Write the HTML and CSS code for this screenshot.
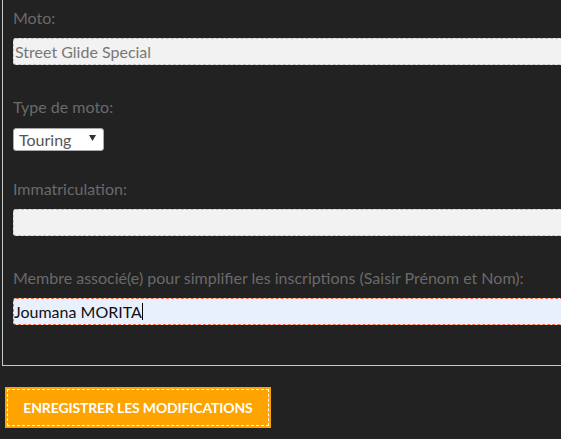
FILE: index.html
```html
<!DOCTYPE html>
<html lang="fr">
<head>
<meta charset="utf-8">
<title>Moto</title>
<link rel="stylesheet" href="styles.css">
</head>
<body>
<form class="form">
  <div class="fieldset">
    <div class="field">
      <label class="label">Moto:</label>
      <input class="input" type="text" value="Street Glide Special">
    </div>
    <div class="field field-select">
      <label class="label">Type de moto:</label>
      <div class="select-wrap">
        <select class="select">
          <option>Touring</option>
        </select>
        <svg class="select-arrow" width="7" height="6" viewBox="0 0 7 6"><path d="M0 0 H7 L3.5 6 Z" fill="#333"/></svg>
      </div>
    </div>
    <div class="field">
      <label class="label">Immatriculation:</label>
      <input class="input" type="text" value="">
    </div>
    <div class="field field-last">
      <label class="label">Membre associé(e) pour simplifier les inscriptions (Saisir Prénom et Nom):</label>
      <div class="input input-active">Joumana MORITA<span class="caret"></span></div>
    </div>
  </div>
  <div class="actions">
    <button class="btn" type="button">Enregistrer les modifications</button>
  </div>
</form>
</body>
</html>
```

FILE: styles.css
```css
html, body {
  margin: 0;
  padding: 0;
  background: #222222;
  overflow: hidden;
}
body {
  font-family: Lato, "Open Sans", sans-serif;
  font-size: 16px;
  color: #6a6a6a;
}
.form {
  display: block;
  width: 561px;
  overflow: hidden;
}
.fieldset {
  margin-left: 2px;
  width: 620px;
  border: 1px solid #c8c8c8;
  border-top: none;
  padding: 8px 10px 40px 10px;
}
.field {
  display: flex;
  flex-direction: column;
  align-items: flex-start;
  margin-bottom: 32px;
}
.field-select {
  margin-bottom: 28px;
}
.field-last {
  margin-bottom: 0;
}
.label {
  display: block;
  line-height: 20px;
  margin-bottom: 10px;
  color: #6a6a6a;
  white-space: nowrap;
}
.field-select .label {
  margin-bottom: 11px;
}
.input {
  box-sizing: border-box;
  width: 600px;
  height: 27px;
  margin: 0;
  padding: 0 1px;
  border: 1px dashed #c4c4c4;
  border-radius: 3px;
  background: #f2f2f2;
  font-family: Lato, "Open Sans", sans-serif;
  font-size: 16px;
  color: #777777;
  outline: none;
}
.input-active {
  display: flex;
  align-items: center;
  padding: 0;
  background: #e8f0fe;
  border-color: #f26a3e;
  color: #111111;
}
.caret {
  display: inline-block;
  width: 1px;
  height: 17px;
  background: #000;
}
.select-wrap {
  position: relative;
  width: 91px;
  height: 23px;
}
.select {
  appearance: none;
  -webkit-appearance: none;
  box-sizing: border-box;
  width: 91px;
  height: 23px;
  margin: 0;
  padding: 0 0 0 5px;
  border: 1px solid #a9a9a9;
  border-radius: 3px;
  background: #ffffff;
  font-family: Lato, "Open Sans", sans-serif;
  font-size: 16px;
  color: #555555;
}
.select-arrow {
  position: absolute;
  right: 8px;
  top: 7px;
  pointer-events: none;
}
.actions {
  padding: 21px 0 0 5px;
}
.btn {
  display: block;
  box-sizing: border-box;
  width: 266px;
  height: 41px;
  margin: 0;
  padding: 0;
  border: none;
  background: #ffa300;
  outline: 1px dashed #ffffff;
  outline-offset: -3px;
  font-family: Lato, "Open Sans", sans-serif;
  font-weight: 700;
  font-size: 14px;
  letter-spacing: -0.15px;
  text-transform: uppercase;
  color: #ffffff;
}
```
